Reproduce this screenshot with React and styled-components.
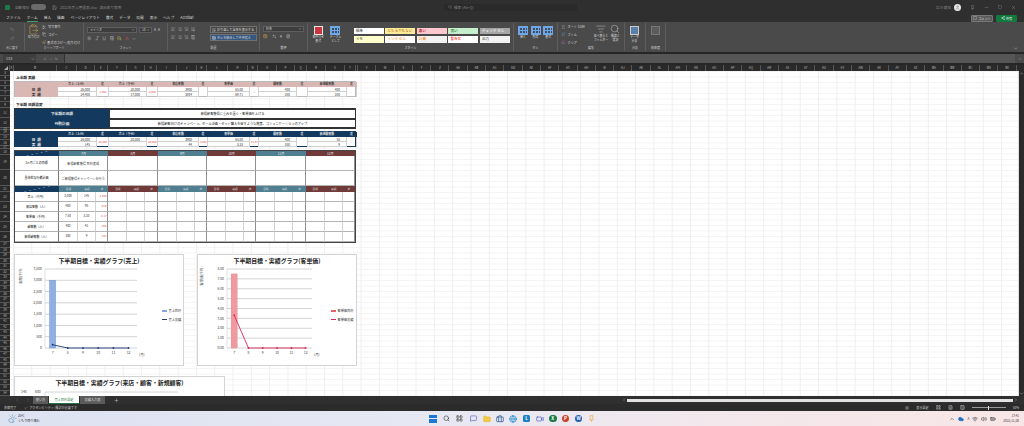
import styled, { createGlobalStyle } from "styled-components";
import {
  Undo2, Redo2, Scissors, Copy, Paintbrush, ClipboardPaste, Search, Save, Bold, Italic, Underline,
  AlignLeft, AlignCenter, AlignRight, WrapText, Percent, Sigma, Eraser, ListFilter, Table, Minus,
  Square, X, ChevronDown, ChevronUp, User, MessageSquare, Share2, Plus, Wifi, Volume2, BatteryFull,
  ChevronLeft, ChevronRight, Cloud, CloudSun, Settings, LayoutGrid, FileText, Columns3, PaintBucket,
  Baseline, Check, Grid2x2, ArrowDownUp, Folder, Briefcase, Globe, Video, Pin,
} from "lucide-react";

const GlobalStyle = createGlobalStyle`
  html, body { margin: 0; padding: 0; background: #2b2b2b; }
  body { font-family: "Noto Sans CJK JP", "Noto Sans", sans-serif; }
  * { box-sizing: border-box; }
`;

const Page = styled.div`
  width: 1024px;
  height: 426px;
  display: flex;
  flex-direction: column;
  overflow: hidden;
  background: #262626;
`;

/* ---------- title bar ---------- */
const TopArea = styled.div`
  height: 22px;
  background: #2f2f2f;
  color: #bbb;
  font-size: 3.6px;
  display: flex;
  flex-direction: column;
`;
const TitleRow = styled.div`
  height: 14px;
  display: flex;
  align-items: center;
  padding-left: 5px;
`;
const AppIcon = styled.div`
  width: 5px;
  height: 5px;
  background: #1d7a46;
  border-radius: 1px;
  margin-right: 5px;
`;
const AutoSave = styled.span`
  width: 14px;
  white-space: nowrap;
  color: #888;
`;
const Toggle = styled.div`
  width: 15px;
  height: 6px;
  border-radius: 3px;
  background: #6a6a6a;
  margin: 0 6px 0 2px;
`;
const FileName = styled.span`
  margin-left: 3px;
  width: 130px;
  flex: none;
  white-space: nowrap;
  color: #888;
`;
const SearchBox = styled.div`
  width: 133px;
  height: 7px;
  flex: none;
  margin-left: 254px;
  background: #2a2a2a;
  border-radius: 1px;
  display: flex;
  align-items: center;
  gap: 2px;
  padding-left: 4px;
  color: #888;
`;
const UserArea = styled.div`
  margin-left: auto;
  display: flex;
  align-items: center;
  padding-right: 8px;
  gap: 9px;
  color: #888;
`;
const Avatar = styled.div`
  width: 7px;
  height: 7px;
  margin-left: -6px;
  border-radius: 50%;
  background: #e8e8e8;
  color: #777;
  display: flex;
  align-items: center;
  justify-content: center;
`;
const TabRow = styled.div`
  height: 8px;
  display: flex;
  align-items: center;
  padding-left: 6px;
  gap: 6px;
  color: #ddd;
  font-size: 3.7px;
`;
const MenuTab = styled.span`
  line-height: 6px;
  border-bottom: 1px solid ${(p) => (p.$active ? "#3fa066" : "transparent")};
`;
const ActionGroup = styled.div`
  margin-left: auto;
  display: flex;
  gap: 3px;
  padding-right: 7px;
`;
const CommentButton = styled.div`
  width: 22px;
  height: 7px;
  background: #5a5a5a;
  border: 1px solid #777;
  border-radius: 1px;
  display: flex;
  align-items: center;
  justify-content: center;
  gap: 1px;
  font-size: 3.2px;
  color: #ddd;
`;
const ShareButton = styled(CommentButton)`
  width: 21px;
  background: #12793f;
  border-color: #12793f;
  color: #fff;
`;

/* ---------- ribbon ---------- */
const Ribbon = styled.div`
  height: 30px;
  background: #4a4a4a;
  display: flex;
  color: #ddd;
  font-size: 3.2px;
  position: relative;
`;
const RibbonGroup = styled.div`
  width: ${(p) => p.$w}px;
  flex: none;
  display: flex;
  flex-direction: column;
  border-right: 1px solid #5e5e5e;
  margin: 1px 0;
`;
const GroupBody = styled.div`
  height: 22px;
  display: flex;
  gap: ${(p) => p.$gap || 2}px;
  padding: ${(p) => p.$pt ?? 3}px 3px 0;
`;
const GroupLabel = styled.div`
  height: 6px;
  line-height: 6px;
  text-align: center;
  font-size: 3px;
  color: #ccc;
`;
const Stack = styled.div`
  display: flex;
  flex-direction: column;
  gap: ${(p) => p.$gap || 2}px;
  flex: ${(p) => (p.$grow ? 1 : "none")};
  width: ${(p) => (p.$w ? `${p.$w}px` : "auto")};
  align-items: ${(p) => (p.$center ? "center" : "stretch")};
`;
const IconRow = styled.div`
  display: flex;
  align-items: center;
  gap: ${(p) => p.$gap || 2}px;
  height: ${(p) => p.$h || 7}px;
  white-space: nowrap;
  color: #ddd;
`;
const Select = styled.div`
  width: ${(p) => p.$w}px;
  height: 6px;
  background: #3d3d3d;
  border: 1px solid #5e5e5e;
  display: flex;
  align-items: center;
  justify-content: space-between;
  padding: 0 1px 0 2px;
  font-size: 3px;
`;
const WideButton = styled.div`
  width: 47px;
  height: 7px;
  margin-left: 13px;
  border: 1px solid #707070;
  background: ${(p) => (p.$on ? "#35577f" : "#474747")};
  display: flex;
  align-items: center;
  gap: 1px;
  padding-left: 1px;
  font-size: 3.1px;
  white-space: nowrap;
  overflow: hidden;
`;
const BigTool = styled.div`
  width: ${(p) => p.$w || 13}px;
  display: flex;
  flex-direction: column;
  align-items: center;
  text-align: center;
  font-size: 2.9px;
  line-height: 3.6px;
  gap: 1px;
  color: #ddd;
  white-space: nowrap;
`;
const ToolSwatch = styled.div`
  width: 9px;
  height: 9px;
  background: ${(p) => p.$bg};
  border: 1px solid ${(p) => p.$line};
`;
const CellSwatch = styled.div`
  width: 10px;
  height: 9px;
  background-color: #3c4f66;
  background-image:
    linear-gradient(90deg, #6ea6e6 1px, transparent 1px),
    linear-gradient(#6ea6e6 1px, transparent 1px);
  background-size: 3px 3px;
  border: 0.5px solid #6ea6e6;
`;
const StyleGrid = styled.div`
  display: grid;
  grid-template-columns: repeat(5, 30px);
  grid-template-rows: 6px 7px;
  column-gap: 1.6px;
  row-gap: 2px;
  margin: 2px 0 0 8px;
`;
const StyleCell = styled.div`
  background: ${(p) => p.$bg};
  color: ${(p) => p.$fg};
  font-size: 3.6px;
  line-height: 6px;
  padding-left: 2px;
  white-space: nowrap;
  overflow: hidden;
`;
const RibbonChevron = styled.div`
  position: absolute;
  right: 6px;
  bottom: 1px;
  color: #ccc;
  display: flex;
`;

const Gap = styled.div`
  height: 2px;
  background: #262626;
`;

/* ---------- formula bar ---------- */
const FormulaBar = styled.div`
  height: 9px;
  display: flex;
  align-items: stretch;
  background: #4a4a4a;
  color: #ccc;
  font-size: 3.4px;
  padding-left: 3px;
`;
const NameBox = styled.div`
  width: 33px;
  display: flex;
  align-items: center;
  justify-content: space-between;
  padding: 0 1px 0 3px;
  background: #3e3e3e;
`;
const FormulaIcons = styled.div`
  width: 28px;
  display: flex;
  align-items: center;
  justify-content: center;
  gap: 2px;
  color: #999;
`;
const FormulaInput = styled.div`
  flex: 1;
  background: #565656;
  border-left: 1px solid #333;
`;
const FormulaEnd = styled.div`
  width: 9px;
  display: flex;
  align-items: center;
  justify-content: center;
`;

/* ---------- sheet headers ---------- */
const ColumnHeader = styled.div`
  height: 6px;
  display: flex;
  background: #2a2a2a;
  color: #bbb;
  font-size: 3px;
`;
const Corner = styled.div`
  width: 10px;
  flex: none;
  border-right: 1px solid #555;
  &::after {
    content: "";
    display: block;
    margin: 1px 0 0 4px;
    border-left: 4px solid transparent;
    border-bottom: 4px solid #aaa;
    width: 0;
  }
`;
const ColumnCell = styled.div`
  width: ${(p) => p.$w}px;
  flex: none;
  text-align: center;
  line-height: 6px;
  border-right: 1px solid #555;
  overflow: hidden;
`;
const SheetArea = styled.div`
  flex: 1;
  display: flex;
  min-height: 0;
`;
const RowHeader = styled.div`
  width: 10px;
  flex: none;
  background: #2a2a2a;
  overflow: hidden;
`;
const RowNumber = styled.div`
  height: ${(p) => p.$h}px;
  line-height: ${(p) => p.$h}px;
  font-size: 3px;
  text-align: center;
  color: #bbb;
  border-bottom: 0.5px solid #555;
`;
const Sheet = styled.div`
  flex: 1;
  min-width: 0;
  overflow: hidden;
  background-color: #fff;
  background-image:
    linear-gradient(90deg, #efefef 1px, transparent 1px),
    linear-gradient(#f3f3f3 1px, transparent 1px);
  background-size: 18.3px 5.5px;
  background-position: 3px 0;
  padding: 4px 0 0 4px;
  display: flex;
  flex-direction: column;
  align-items: flex-start;
`;
const VScroll = styled.div`
  width: 6px;
  flex: none;
  background: #2b2b2b;
  color: #ccc;
  display: flex;
  flex-direction: column;
  align-items: center;
  justify-content: space-between;
  border-left: 1px solid #ddd;
`;
const SectionTitle = styled.div`
  height: 6px;
  line-height: 6px;
  font-size: 3.7px;
  font-weight: 700;
  color: #222;
  margin-left: 2px;
`;

/* ---------- tables ---------- */
const summaryColumns = "43px 38px 13px 37px 12px 40px 10px 41px 10px 37px 12px 38px 11px";
const SummaryTable = styled.div`
  display: grid;
  grid-template-columns: ${summaryColumns};
  grid-template-rows: 5px 5px 5px;
  width: 342px;
  height: 16px;
  background: #fff;
  border: 0.5px solid ${(p) => (p.$dark ? "#14395f" : "#bbb")};
  margin-bottom: ${(p) => p.$mb}px;
  font-size: 3.1px;
  color: #333;
`;
const HeadCell = styled.div`
  background: ${(p) => p.$bg};
  color: ${(p) => p.$fg};
  font-weight: 700;
  font-size: 2.9px;
  text-align: center;
  line-height: 5px;
`;
const RowLabel = styled.div`
  background: ${(p) => p.$bg};
  color: ${(p) => p.$fg};
  font-size: 3.6px;
  font-weight: 700;
  letter-spacing: 0.5px;
  text-align: center;
  line-height: 5px;
  grid-column: 1;
  grid-row: ${(p) => p.$row};
`;
const ValueCell = styled.div`
  grid-column: ${(p) => p.$col};
  grid-row: ${(p) => p.$row};
  text-align: right;
  padding-right: 6px;
  line-height: 5px;
  border-bottom: 0.5px solid #d0d0d0;
`;
const DiffCell = styled.div`
  grid-row: 2 / span 2;
  grid-column: ${(p) => p.$col};
  font-size: 2.7px;
  color: #e04848;
  display: flex;
  align-items: center;
  justify-content: center;
  white-space: nowrap;
  border-left: 0.5px solid #d0d0d0;
  border-right: 0.5px solid #d0d0d0;
`;
const GoalBlock = styled.div`
  display: grid;
  grid-template-columns: 94px 247px;
  grid-template-rows: 9.5px 9.5px;
  width: 342px;
  margin-bottom: 2px;
  border: 0.5px solid #333;
  background: #fff;
  font-size: 3.2px;
`;
const GoalLabel = styled.div`
  background: #14395f;
  color: #e8e8e8;
  font-weight: 700;
  font-size: 3.7px;
  display: flex;
  align-items: center;
  justify-content: center;
`;
const GoalText = styled.div`
  display: flex;
  align-items: center;
  justify-content: center;
  color: #222;
  border: 0.5px solid #333;
  white-space: nowrap;
`;
const PlanTable = styled.div`
  display: grid;
  grid-template-columns: 44px repeat(6, 19px 18px 12.33px);
  grid-template-rows: 5px 15px 15px 6px repeat(5, 10px);
  width: 342px;
  background: #fff;
  border: 1px solid #444;
  margin-bottom: 11px;
  font-size: 3.1px;
  color: #333;
`;
const CornerCell = styled.div`
  background: linear-gradient(168deg, #14395f 48%, #6f8aa5 50%, #14395f 52%);
`;
const MonthCell = styled.div`
  grid-column: span 3;
  background: ${(p) => (p.$teal ? "#4f7f90" : "#6f3a38")};
  color: #e8e8e8;
  text-align: center;
  line-height: 5px;
  font-size: 3.1px;
`;
const PlanLabel = styled.div`
  display: flex;
  align-items: center;
  justify-content: center;
  font-weight: 500;
  font-size: 3px;
  white-space: nowrap;
  border-right: 1px solid #777;
  border-bottom: 1px solid #b4b4b4;
`;
const PlanText = styled.div`
  grid-column: span 3;
  display: flex;
  align-items: center;
  justify-content: center;
  white-space: nowrap;
  border-right: 1.2px solid #8f8f8f;
  border-bottom: 1px solid #b4b4b4;
`;
const SubHead = styled.div`
  background: ${(p) => (p.$teal ? "#4f7f90" : "#6f3a38")};
  color: #dcdcdc;
  font-size: 2.7px;
  text-align: center;
  line-height: 6px;
`;
const DataCell = styled.div`
  border-bottom: 1px solid #b4b4b4;
  border-right: ${(p) => (p.$end ? "1.2px solid #8f8f8f" : "1.4px solid #d2d2d2")};
  text-align: ${(p) => (p.$diff ? "right" : "center")};
  padding-right: ${(p) => (p.$diff ? 1 : 0)}px;
  font-size: ${(p) => (p.$diff ? 2.6 : 3)}px;
  line-height: 9px;
  white-space: nowrap;
  color: ${(p) => (p.$diff ? "#e04848" : "#333")};
`;

/* ---------- charts ---------- */
const ChartRow = styled.div`
  display: flex;
  gap: 13px;
  margin-bottom: 10px;
`;
const ChartCard = styled.div`
  width: ${(p) => p.$w}px;
  height: 112px;
  flex: none;
  background: #fff;
  border: 1px solid #d4d4d4;
  display: flex;
  flex-direction: column;
`;
const ChartTitle = styled.div`
  height: 10px;
  line-height: 12px;
  text-align: center;
  font-size: 5.9px;
  font-weight: 700;
  color: #222;
  white-space: nowrap;
`;
const ChartBody = styled.div`
  display: flex;
  align-items: center;
`;
const Legend = styled.div`
  display: flex;
  flex-direction: column;
  gap: 3.5px;
  font-size: 3.2px;
  color: #333;
`;
const LegendItem = styled.div`
  display: flex;
  align-items: center;
  gap: 1.5px;
  white-space: nowrap;
`;
const LegendMark = styled.div`
  width: 5px;
  height: ${(p) => (p.$bar ? 1.6 : 1)}px;
  background: ${(p) => p.$c};
`;

const AxisText = styled.text`
  font-size: 3.4px;
  fill: #444;
`;

const Chart = ({ width, x0, x1, ticks, max, bar, line, barFill, barLine, lineColor, axisTitle, titleX, pointStep, format }) => {
  const top = 4;
  const bottom = 83;
  const yOf = (v) => bottom - ((bottom - top) * v) / max;
  const xOf = (i) => x0 + pointStep * (i + 0.5);
  const points = line.map((v, i) => `${xOf(i)},${yOf(v)}`).join(" ");
  return (
    <svg width={width} height="100" viewBox={`0 0 ${width} 100`}>
      <AxisText transform={`translate(${titleX} 11) rotate(-90)`} textAnchor="middle">
        {axisTitle}
      </AxisText>
      {ticks.map((t) => (
        <g key={t}>
          <line x1={x0} x2={x1} y1={yOf(t)} y2={yOf(t)} stroke="#d4d4d4" strokeWidth="1" />
          <AxisText x={x0 - 3} y={yOf(t) + 1.2} textAnchor="end">
            {format(t)}
          </AxisText>
        </g>
      ))}
      <line x1={x0} x2={x0} y1={top} y2={bottom} stroke="#ccc" strokeWidth="0.6" />
      <rect x={xOf(0) - 3} y={yOf(bar)} width="6" height={bottom - yOf(bar)} fill={barFill} stroke={barLine} strokeWidth="0.4" />
      <polyline points={points} fill="none" stroke={lineColor} strokeWidth="0.9" />
      {line.map((v, i) => (
        <circle key={i} cx={xOf(i)} cy={yOf(v)} r="0.9" fill={lineColor} />
      ))}
      {[7, 8, 9, 10, 11, 12].map((m, i) => (
        <AxisText key={m} x={xOf(i)} y={bottom + 5.5} textAnchor="middle">
          {m}
        </AxisText>
      ))}
      <AxisText x={x1 + 2} y={bottom + 8}>(月)</AxisText>
    </svg>
  );
};

/* ---------- bottom ---------- */
const SheetTabs = styled.div`
  height: 8px;
  display: flex;
  align-items: stretch;
  background: #2f2f2f;
  color: #ddd;
  font-size: 3.2px;
  padding-left: 11px;
`;
const TabArrow = styled.div`
  width: 11px;
  display: flex;
  align-items: center;
  justify-content: center;
  color: #888;
`;
const SheetTab = styled.div`
  width: ${(p) => p.$w}px;
  margin-right: 1px;
  background: ${(p) => (p.$active ? "#fff" : "#5b5b5b")};
  color: ${(p) => (p.$active ? "#1f7a45" : "#ddd")};
  border-bottom: ${(p) => (p.$active ? "1px solid #1f7a45" : "none")};
  text-align: center;
  line-height: 8px;
`;
const AddSheet = styled.div`
  margin-left: 8px;
  display: flex;
  align-items: center;
  color: #ccc;
`;
const HScroll = styled.div`
  margin-left: auto;
  width: 396px;
  margin-right: 6px;
  display: flex;
  align-items: center;
  gap: 1px;
  color: #ccc;
`;
const HThumb = styled.div`
  flex: 1;
  height: 3px;
  background: #e2e2e2;
`;
const StatusBar = styled.div`
  height: 7px;
  display: flex;
  align-items: center;
  background: #2b2b2b;
  color: #ccc;
  font-size: 3.1px;
  padding: 0 5px 0 4px;
  gap: 6px;
`;
const AccessNote = styled.span`
  display: flex;
  align-items: center;
  gap: 1px;
  margin-left: 2px;
`;
const StatusRight = styled.div`
  margin-left: auto;
  display: flex;
  align-items: center;
  gap: 7px;
`;
const Zoomer = styled.div`
  width: 34px;
  height: 1px;
  background: #999;
  display: flex;
  justify-content: center;
  align-items: center;
`;
const ZoomKnob = styled.div`
  width: 1.5px;
  height: 4px;
  background: #ddd;
`;
const Taskbar = styled.div`
  height: 15px;
  display: flex;
  align-items: center;
  background: linear-gradient(90deg, #dde2f1, #e6e8f3 40%, #f3e8ec 70%, #f8e6e6);
  padding: 0 5px 0 8px;
  font-size: 3.1px;
  color: #333;
`;
const Weather = styled.div`
  width: 421px;
  flex: none;
  display: flex;
  align-items: center;
  gap: 1px;
  line-height: 4.5px;
  color: #3f78b5;
`;
const WeatherText = styled.div`
  color: #333;
`;
const TaskIcons = styled.div`
  display: flex;
  align-items: center;
  gap: 5.4px;
`;
const WinLogo = styled.div`
  width: 8px;
  height: 8px;
  display: grid;
  grid-template-columns: 1fr 1fr;
  gap: 0.6px;
`;
const WinPane = styled.div`
  background: #1c78d0;
`;
const TaskIcon = styled.div`
  width: 8px;
  height: 8px;
  display: flex;
  align-items: center;
  justify-content: center;
  color: ${(p) => p.$c};
`;
const OfficeIcon = styled.div`
  width: 7.5px;
  height: 7.5px;
  border-radius: ${(p) => (p.$round ? "50%" : "1.5px")};
  background: ${(p) => p.$c};
  color: #fff;
  font-size: 4.6px;
  font-weight: 700;
  line-height: 7.5px;
  text-align: center;
`;
const Tray = styled.div`
  margin-left: auto;
  display: flex;
  align-items: center;
  gap: 3px;
  color: #333;
`;
const Clock = styled.div`
  margin-left: 4px;
  text-align: right;
  line-height: 4.6px;
  font-size: 3px;
`;

/* ---------- data ---------- */
const letters = (i) => {
  const a = "ABCDEFGHIJKLMNOPQRSTUVWXYZ";
  return i < 26 ? a[i] : a[Math.floor(i / 26) - 1] + a[i % 26];
};
const fixedColumns = [4, 43, 20, 18, 13, 19, 18, 12, 20, 20, 10, 21, 20, 10, 19, 18, 12, 19, 19, 11, 2];
const columnWidths = [...fixedColumns, ...Array(36).fill(18.3)];

const rowHeights = [
  [3, 5], [4, 5], [5, 5], [6, 5], [7, 5], [8, 6], [9, 6], [11, 10], [12, 10], [13, 2], [14, 5], [15, 5], [16, 6], [17, 3],
  [18, 6], [19, 15], [20, 16], [21, 6], [22, 10], [23, 10], [24, 10], [25, 10], [26, 10],
  ...Array.from({ length: 28 }, (_, i) => [27 + i, 5.5]),
];

const summaryHead = ["", "売上（上代）", "差", "売上（下代）", "差", "来店客数", "差", "客単価", "差", "顧客数", "差", "新規顧客数", "差"];
const firstHalf = [
  ["26,000", "24,400", "-1,600"],
  ["20,000", "17,000", "-3,000"],
  ["3900", "3884", "-"],
  ["65.00", "69.71", "+"],
  ["400", "350", "-"],
  ["400", "350", "-"],
];
const secondHalf = [
  ["26,000", "145", "-25,855"],
  ["20,000", "", "-20,000"],
  ["3900", "44", "-3,856"],
  ["65.00", "3.33", "-61.67"],
  ["400", "350", "-"],
  ["50", "9", "-"],
];
const months = ["7月", "8月", "9月", "10月", "11月", "12月"];
const planRows = [
  ["売上（千円）", "3,000", "145", "-2,855"],
  ["来店客数（人）", "900", "90", "-810"],
  ["客単価（千円）", "7.50", "3.33", "-4.17"],
  ["顧客数（人）", "400", "42", "-358"],
  ["新規顧客数（人）", "300", "9", "-291"],
];
const styleCells = [
  ["標準", "#fff", "#222"],
  ["どちらでもない", "#ffeb9c", "#9c6500"],
  ["悪い", "#ffc7ce", "#9c0006"],
  ["良い", "#c6efce", "#006100"],
  ["チェック セル", "#a5a5a5", "#fff"],
  ["メモ", "#ffffcc", "#222"],
  ["リンク セル", "#fff", "#fa7d00"],
  ["計算", "#f2f2f2", "#fa7d00"],
  ["警告文", "#fff", "#f00"],
  ["出力", "#f2f2f2", "#3f3f3f"],
];
const menu = ["ファイル", "ホーム", "挿入", "描画", "ページレイアウト", "数式", "データ", "校閲", "表示", "ヘルプ", "Acrobat"];

const Summary = ({ rows, headBg, headFg, labelBg, labelFg, dark, mb }) => (
  <SummaryTable $dark={dark} $mb={mb}>
    {summaryHead.map((h, i) => (
      <HeadCell key={i} $bg={headBg} $fg={headFg}>{h}</HeadCell>
    ))}
    <RowLabel $row={2} $bg={labelBg} $fg={labelFg}>目 標</RowLabel>
    <RowLabel $row={3} $bg={labelBg} $fg={labelFg}>実 績</RowLabel>
    {rows.map((r, i) => [
      <ValueCell key={`t${i}`} $col={2 + i * 2} $row={2}>{r[0]}</ValueCell>,
      <ValueCell key={`a${i}`} $col={2 + i * 2} $row={3}>{r[1]}</ValueCell>,
      <DiffCell key={`d${i}`} $col={3 + i * 2}>{r[2]}</DiffCell>,
    ])}
  </SummaryTable>
);

const icon = { size: 4.5, strokeWidth: 1.5 };

const App = () => (
  <Page>
    <GlobalStyle />
    <TopArea>
      <TitleRow>
        <AppIcon />
        <AutoSave>自動保存</AutoSave>
        <Toggle />
        <Save size={5} strokeWidth={1.2} />
        <FileName>2022年売上管理表.xlsx - 読み取り専用</FileName>
        <SearchBox>
          <Search size={4} />
          検索 (Alt+Q)
        </SearchBox>
        <UserArea>
          <span>北川 健也</span>
          <Avatar><User size={5} /></Avatar>
          <Pin size={5} />
          <Minus size={5} />
          <Square size={4} />
          <X size={5} />
        </UserArea>
      </TitleRow>
      <TabRow>
        {menu.map((m, i) => (
          <MenuTab key={m} $active={i === 1}>{m}</MenuTab>
        ))}
        <ActionGroup>
          <CommentButton><MessageSquare size={4} />コメント</CommentButton>
          <ShareButton><Share2 size={4} />共有</ShareButton>
        </ActionGroup>
      </TabRow>
    </TopArea>

    <Ribbon>
      <RibbonGroup $w={25}>
        <GroupBody>
          <Stack $center $grow>
            <IconRow><Undo2 {...icon} color="#999" /></IconRow>
            <IconRow><Redo2 {...icon} color="#999" /></IconRow>
          </Stack>
        </GroupBody>
        <GroupLabel>元に戻す</GroupLabel>
      </RibbonGroup>
      <RibbonGroup $w={59}>
        <GroupBody $pt={1}>
          <BigTool>
            <ClipboardPaste size={11} strokeWidth={1} color="#e3b04b" />
            貼り付け
          </BigTool>
          <Stack $gap={0}>
            <IconRow><Scissors {...icon} />切り取り</IconRow>
            <IconRow><Copy {...icon} />コピー</IconRow>
            <IconRow $gap={1}><Paintbrush {...icon} color="#e3b04b" />書式のコピー/貼り付け</IconRow>
          </Stack>
        </GroupBody>
        <GroupLabel>クリップボード</GroupLabel>
      </RibbonGroup>
      <RibbonGroup $w={84}>
        <GroupBody>
          <Stack>
            <IconRow>
              <Select $w={50}>メイリオ<ChevronDown size={4} /></Select>
              <Select $w={13}>10<ChevronDown size={4} /></Select>
              <span>A</span><span>A</span>
            </IconRow>
            <IconRow $gap={3}>
              <Bold {...icon} /><Italic {...icon} /><Underline {...icon} />
              <Grid2x2 {...icon} />
              <PaintBucket {...icon} color="#f3d55b" />
              <Baseline {...icon} color="#e85a4f" />
              <ChevronDown size={4} />
            </IconRow>
          </Stack>
        </GroupBody>
        <GroupLabel>フォント</GroupLabel>
      </RibbonGroup>
      <RibbonGroup $w={92}>
        <GroupBody $gap={0}>
          <Stack $gap={1}>
            <IconRow><AlignLeft {...icon} /><AlignCenter {...icon} /><AlignRight {...icon} /><WrapText {...icon} /></IconRow>
            <IconRow><AlignLeft {...icon} /><AlignCenter {...icon} /><AlignRight {...icon} /><Columns3 {...icon} /></IconRow>
          </Stack>
          <Stack $gap={1}>
            <WideButton><WrapText size={4} />折り返して全体を表示する</WideButton>
            <WideButton $on><Table size={4} />セルを結合して中央揃え</WideButton>
          </Stack>
        </GroupBody>
        <GroupLabel>配置</GroupLabel>
      </RibbonGroup>
      <RibbonGroup $w={48}>
        <GroupBody>
          <Stack $gap={1}>
            <Select $w={41}>標準<ChevronDown size={4} /></Select>
            <IconRow $gap={4}><Table {...icon} color="#e3b04b" /><Percent {...icon} /><span>9</span><FileText {...icon} /></IconRow>
          </Stack>
        </GroupBody>
        <GroupLabel>数値</GroupLabel>
      </RibbonGroup>
      <RibbonGroup $w={206}>
        <GroupBody $gap={0}>
          <BigTool $w={15}>
            <ToolSwatch $bg="#c9363d" $line="#e9e9e9" />
            条件付き<br />書式
          </BigTool>
          <BigTool $w={17}>
            <CellSwatch />
            テーブル<br />として
          </BigTool>
          <StyleGrid>
            {styleCells.map(([t, bg, fg]) => (
              <StyleCell key={t} $bg={bg} $fg={fg}>{t}</StyleCell>
            ))}
          </StyleGrid>
        </GroupBody>
        <GroupLabel>スタイル</GroupLabel>
      </RibbonGroup>
      <RibbonGroup $w={44}>
        <GroupBody $gap={1}>
          <BigTool><CellSwatch />挿入</BigTool>
          <BigTool><CellSwatch />削除</BigTool>
          <BigTool><CellSwatch />書式</BigTool>
        </GroupBody>
        <GroupLabel>セル</GroupLabel>
      </RibbonGroup>
      <RibbonGroup $w={67}>
        <GroupBody $gap={1} $pt={1}>
          <Stack $gap={0} $w={31}>
            <IconRow><Sigma {...icon} />オート SUM</IconRow>
            <IconRow><ArrowDownUp {...icon} color="#6aa5e0" />フィル</IconRow>
            <IconRow><Eraser {...icon} color="#d77cc8" />クリア</IconRow>
          </Stack>
          <BigTool $w={17}><ListFilter size={10} strokeWidth={1} />並べ替えと<br />フィルター</BigTool>
          <BigTool $w={12}><Search size={10} strokeWidth={1} />検索と<br />選択</BigTool>
        </GroupBody>
        <GroupLabel>編集</GroupLabel>
      </RibbonGroup>
      <RibbonGroup $w={21}>
        <GroupBody>
          <BigTool><ToolSwatch $bg="#5a7fa8" $line="#ccc" />データ<br />分析</BigTool>
        </GroupBody>
        <GroupLabel>分析</GroupLabel>
      </RibbonGroup>
      <RibbonGroup $w={20}>
        <GroupBody>
          <BigTool><ToolSwatch $bg="#5c5c5c" $line="#777" /></BigTool>
        </GroupBody>
        <GroupLabel>秘密度</GroupLabel>
      </RibbonGroup>
      <RibbonChevron><ChevronDown size={5} /></RibbonChevron>
    </Ribbon>
    <Gap />
    <FormulaBar>
      <NameBox>O18<ChevronDown size={4} /></NameBox>
      <FormulaIcons><X size={4} /><Check size={4} /><i>fx</i></FormulaIcons>
      <FormulaInput />
      <FormulaEnd><ChevronDown size={4} /></FormulaEnd>
    </FormulaBar>
    <Gap />
    <ColumnHeader>
      <Corner />
      {columnWidths.map((w, i) => (
        <ColumnCell key={i} $w={w}>{i === 20 ? "" : letters(i)}</ColumnCell>
      ))}
    </ColumnHeader>

    <SheetArea>
      <RowHeader>
        {rowHeights.map(([n, h]) => (
          <RowNumber key={n} $h={h}>{n}</RowNumber>
        ))}
      </RowHeader>
      <Sheet>
        <SectionTitle>上半期 実績</SectionTitle>
        <Summary rows={firstHalf} headBg="#d8b7b5" headFg="#333" labelBg="#d8b7b5" labelFg="#333" mb={5} />
        <SectionTitle>下半期 目標設定</SectionTitle>
        <GoalBlock>
          <GoalLabel>下半期の目標</GoalLabel>
          <GoalText>新規顧客獲得に重みを置く・客単価を上げる</GoalText>
          <GoalLabel>行動計画</GoalLabel>
          <GoalText>新規顧客向けのキャンペーン、セール企画・セット購入を促すような施策、コミュニケーションのアップ</GoalText>
        </GoalBlock>
        <Summary rows={secondHalf} headBg="#14395f" headFg="#e8e8e8" labelBg="#14395f" labelFg="#e8e8e8" dark mb={3} />
        <PlanTable>
          <CornerCell />
          {months.map((m, i) => (
            <MonthCell key={m} $teal={i % 2 === 0}>{m}</MonthCell>
          ))}
          <PlanLabel>1ヵ月ごとの目標</PlanLabel>
          <PlanText>新規顧客獲得 目標達成</PlanText>
          {months.slice(1).map((m) => <PlanText key={m} />)}
          <PlanLabel>具体的な行動計画</PlanLabel>
          <PlanText>ご新規獲得キャンペーンを行う</PlanText>
          {months.slice(1).map((m) => <PlanText key={m} />)}
          <CornerCell />
          {months.map((m, i) =>
            ["目標", "実績", "差"].map((s) => (
              <SubHead key={m + s} $teal={i % 2 === 0}>{s}</SubHead>
            ))
          )}
          {planRows.map((r) => [
            <PlanLabel key={r[0]}>{r[0]}</PlanLabel>,
            ...months.map((m, i) => [
              <DataCell key={r[0] + m + "a"}>{i === 0 ? r[1] : ""}</DataCell>,
              <DataCell key={r[0] + m + "b"}>{i === 0 ? r[2] : ""}</DataCell>,
              <DataCell key={r[0] + m + "c"} $diff $end>{i === 0 ? r[3] : ""}</DataCell>,
            ]),
          ])}
        </PlanTable>
        <ChartRow>
          <ChartCard $w={170}>
            <ChartTitle>下半期目標・実績グラフ(売上)</ChartTitle>
            <ChartBody>
              <Chart
                width={147} x0={30} x1={122} pointStep={15.2} titleX={7} max={3500}
                ticks={[0, 500, 1000, 1500, 2000, 2500, 3000, 3500]} bar={3000} line={[145, 0, 0, 0, 0, 0]}
                barFill="#8fb0e0" barLine="#5b86c8" lineColor="#1f3b78" axisTitle="金額(千円)"
                format={(t) => t.toLocaleString("en-US")}
              />
              <Legend>
                <LegendItem><LegendMark $bar $c="#7ea6dc" />売上目標</LegendItem>
                <LegendItem><LegendMark $c="#1f3b78" />売上実績</LegendItem>
              </Legend>
            </ChartBody>
          </ChartCard>
          <ChartCard $w={160}>
            <ChartTitle>下半期目標・実績グラフ(客単価)</ChartTitle>
            <ChartBody>
              <Chart
                width={133} x0={29} x1={114} pointStep={14.3} titleX={5} max={8}
                ticks={[0, 1, 2, 3, 4, 5, 6, 7, 8]} bar={7.5} line={[3.33, 0, 0, 0, 0, 0]}
                barFill="#f09aa0" barLine="#e57f88" lineColor="#d6285a" axisTitle="客単価(千円)"
                format={(t) => t.toFixed(2)}
              />
              <Legend>
                <LegendItem><LegendMark $bar $c="#e8606e" />客単価目標</LegendItem>
                <LegendItem><LegendMark $c="#d6285a" />客単価実績</LegendItem>
              </Legend>
            </ChartBody>
          </ChartCard>
        </ChartRow>
        <ChartCard $w={211}>
          <ChartTitle>下半期目標・実績グラフ(来店・顧客・新規顧客)</ChartTitle>
          <svg width="209" height="10" viewBox="0 0 209 10">
            <AxisText x="6" y="6">140</AxisText>
            <AxisText x="20" y="6">600</AxisText>
            <line x1="30" x2="163" y1="5" y2="5" stroke="#d4d4d4" strokeWidth="1" />
            <line x1="30" x2="30" y1="5" y2="10" stroke="#ccc" strokeWidth="0.6" />
          </svg>
        </ChartCard>
      </Sheet>
      <VScroll>
        <ChevronUp size={5} />
        <ChevronDown size={5} />
      </VScroll>
    </SheetArea>

    <SheetTabs>
      <TabArrow><ChevronLeft size={4} /></TabArrow>
      <TabArrow><ChevronRight size={4} /></TabArrow>
      <SheetTab $w={15}>使い方</SheetTab>
      <SheetTab $w={30} $active>売上目標設定</SheetTab>
      <SheetTab $w={25}>実績入力表</SheetTab>
      <AddSheet><Plus size={5} /></AddSheet>
      <HScroll>
        <ChevronLeft size={4} />
        <HThumb />
        <ChevronRight size={4} />
      </HScroll>
    </SheetTabs>
    <StatusBar>
      <span>準備完了</span>
      <AccessNote><Check size={4} />アクセシビリティ: 検討が必要です</AccessNote>
      <StatusRight>
        <Settings size={4} />
        <span>表示設定</span>
        <LayoutGrid size={5} />
        <FileText size={5} />
        <Columns3 size={5} />
        <Zoomer><ZoomKnob /></Zoomer>
        <span>50%</span>
      </StatusRight>
    </StatusBar>
    <Taskbar>
      <Weather>
        <CloudSun size={9} strokeWidth={1.2} />
        <WeatherText>20°C<br />くもり時々晴れ</WeatherText>
      </Weather>
      <TaskIcons>
        <WinLogo><WinPane /><WinPane /><WinPane /><WinPane /></WinLogo>
        <TaskIcon $c="#333"><Search size={7} /></TaskIcon>
        <TaskIcon $c="#333"><LayoutGrid size={7} /></TaskIcon>
        <TaskIcon $c="#4b53bc"><MessageSquare size={7} /></TaskIcon>
        <TaskIcon $c="#e8b93a"><Folder size={8} fill="#f2c94c" /></TaskIcon>
        <TaskIcon $c="#1c4f8a"><Briefcase size={8} /></TaskIcon>
        <TaskIcon $c="#1385c9"><Globe size={8} /></TaskIcon>
        <OfficeIcon $c="#1b7fc4">L</OfficeIcon>
        <TaskIcon $c="#5059c9"><Video size={8} /></TaskIcon>
        <OfficeIcon $c="#1d7a46" $round>X</OfficeIcon>
        <OfficeIcon $c="#c8432a" $round>P</OfficeIcon>
        <OfficeIcon $c="#1f5fb0" $round>W</OfficeIcon>
        <TaskIcon $c="#e8a43a"><Pin size={7} /></TaskIcon>
      </TaskIcons>
      <Tray>
        <ChevronUp size={6} />
        <Cloud size={6} fill="#1f6fc0" color="#1f6fc0" />
        <span>A</span>
        <Wifi size={6} />
        <Volume2 size={6} />
        <BatteryFull size={6} />
        <Clock>17:41<br />2022/11/30</Clock>
      </Tray>
    </Taskbar>
  </Page>
);

export default App;
